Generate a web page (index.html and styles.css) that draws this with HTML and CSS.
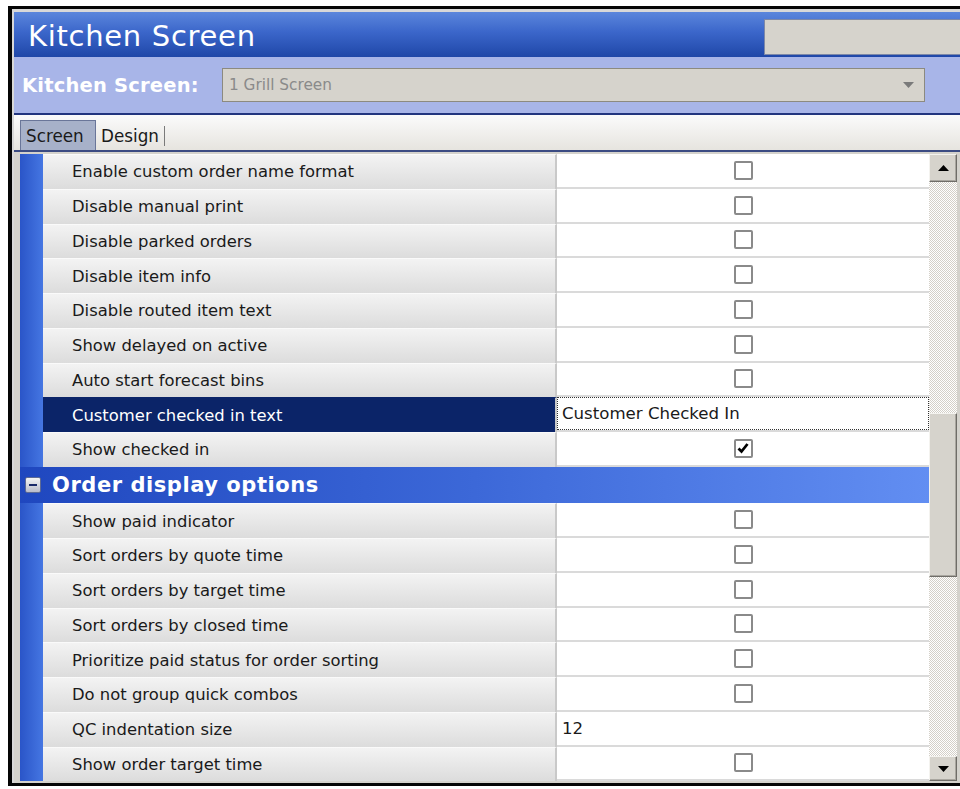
FILE: index.html
```html
<!DOCTYPE html>
<html>
<head>
<meta charset="utf-8">
<title>Kitchen Screen</title>
<link rel="stylesheet" href="styles.css">
</head>
<body>
<div class="window">
  <div class="frame">
    <div class="titlebar">
      <span class="title">Kitchen Screen</span>
      <div class="title-box"></div>
    </div>
    <div class="selector">
      <span class="sel-label">Kitchen Screen:</span>
      <div class="combo">
        <span class="combo-text">1 Grill Screen</span>
        <svg class="combo-arrow" width="11" height="6" viewBox="0 0 11 6"><path d="M0 0 H11 L5.5 6 Z" fill="#7a7a7a"/></svg>
      </div>
    </div>
    <div class="tabs">
      <div class="tab active">Screen</div>
      <div class="tab">Design</div>
      <span class="tab-sep"></span>
    </div>
    <div class="content">
      <div class="rows">
        <div class="row"><span class="strip"></span><span class="label">Enable custom order name format</span><span class="value"><span class="check"></span></span></div>
        <div class="row"><span class="strip"></span><span class="label">Disable manual print</span><span class="value"><span class="check"></span></span></div>
        <div class="row"><span class="strip"></span><span class="label">Disable parked orders</span><span class="value"><span class="check"></span></span></div>
        <div class="row"><span class="strip"></span><span class="label">Disable item info</span><span class="value"><span class="check"></span></span></div>
        <div class="row"><span class="strip"></span><span class="label">Disable routed item text</span><span class="value"><span class="check"></span></span></div>
        <div class="row"><span class="strip"></span><span class="label">Show delayed on active</span><span class="value"><span class="check"></span></span></div>
        <div class="row"><span class="strip"></span><span class="label">Auto start forecast bins</span><span class="value"><span class="check"></span></span></div>
        <div class="row selected"><span class="strip"></span><span class="label">Customer checked in text</span><span class="value text"><span class="edit">Customer Checked In</span></span></div>
        <div class="row"><span class="strip"></span><span class="label">Show checked in</span><span class="value"><span class="check on"><svg width="14" height="14" viewBox="0 0 14 14"><path d="M2.5 7.5 L5.5 10.5 L11.5 3" fill="none" stroke="#000" stroke-width="2.8"/></svg></span></span></div>
        <div class="row group">
          <span class="toggle"><span class="toggle-bar"></span></span>
          <span class="group-title">Order display options</span>
        </div>
        <div class="row"><span class="strip"></span><span class="label">Show paid indicator</span><span class="value"><span class="check"></span></span></div>
        <div class="row"><span class="strip"></span><span class="label">Sort orders by quote time</span><span class="value"><span class="check"></span></span></div>
        <div class="row"><span class="strip"></span><span class="label">Sort orders by target time</span><span class="value"><span class="check"></span></span></div>
        <div class="row"><span class="strip"></span><span class="label">Sort orders by closed time</span><span class="value"><span class="check"></span></span></div>
        <div class="row"><span class="strip"></span><span class="label">Prioritize paid status for order sorting</span><span class="value"><span class="check"></span></span></div>
        <div class="row"><span class="strip"></span><span class="label">Do not group quick combos</span><span class="value"><span class="check"></span></span></div>
        <div class="row"><span class="strip"></span><span class="label">QC indentation size</span><span class="value text"><span class="plain">12</span></span></div>
        <div class="row"><span class="strip"></span><span class="label">Show order target time</span><span class="value"><span class="check"></span></span></div>
      </div>
      <div class="scrollbar">
        <div class="sb-btn up"><svg width="11" height="6" viewBox="0 0 11 6"><path d="M0 6 H11 L5.5 0 Z" fill="#000"/></svg></div>
        <div class="sb-track top"></div>
        <div class="sb-thumb"></div>
        <div class="sb-track rest"></div>
        <div class="sb-btn down"><svg width="11" height="6" viewBox="0 0 11 6"><path d="M0 0 H11 L5.5 6 Z" fill="#000"/></svg></div>
      </div>
    </div>
  </div>
</div>
</body>
</html>
```
FILE: styles.css
```css
html, body {
  margin: 0;
  padding: 0;
}

body {
  background: #fff;
  overflow: hidden;
  font-family: "DejaVu Sans", "Liberation Sans", sans-serif;
  color: #1e1e1e;
}

/* outer window chrome */
.window {
  margin: 6px 0 0 8px;
  width: 948px;
  border: solid #050505;
  border-width: 3px 0 3px 4px;
}

.frame {
  border: solid #d8d8d8;
  border-width: 3px 0 0 2px;
}

/* caption bar */
.titlebar {
  height: 45px;
  display: flex;
  align-items: center;
  justify-content: space-between;
  background: linear-gradient(#5b86dc, #3b66ca 45%, #1f47a8);
}

.title {
  padding-left: 14px;
  padding-top: 3px;
  font-size: 29px;
  color: #fff;
  letter-spacing: 0.7px;
}

.title-box {
  align-self: flex-end;
  margin-bottom: 2px;
  width: 195px;
  height: 34px;
  background: #d6d3cc;
  border: 1px solid #7d88a8;
  border-right: 0;
}

/* screen selector */
.selector {
  height: 56px;
  display: flex;
  align-items: center;
  background: #a8b5e8;
}

.sel-label {
  width: 200px;
  padding-left: 8px;
  font-size: 19.5px;
  font-weight: bold;
  color: #fff;
  letter-spacing: 0.2px;
}

.combo {
  width: 701px;
  height: 32px;
  display: flex;
  align-items: center;
  justify-content: space-between;
  background: #d6d3cc;
  border: 1px solid #8c8a80;
}

.combo-text {
  padding-left: 6px;
  font-size: 15.3px;
  color: #8a8a8a;
}

.combo-arrow {
  margin-right: 10px;
}

/* tab strip */
.tabs {
  height: 35px;
  display: flex;
  align-items: flex-end;
  padding-left: 6px;
  border-top: 2px solid #22357f;
  border-bottom: 2px solid #3b4b82;
  background: linear-gradient(#fbfbfb, #e6e4df);
}

.tab {
  height: 29px;
  padding: 0 5px;
  display: flex;
  align-items: center;
  font-size: 16.8px;
  color: #1a1a1a;
}

.tab.active {
  width: 64px;
  background: #a7b1c9;
  border: 1px solid #6a7699;
  border-bottom: 0;
}

.tab-sep {
  align-self: center;
  margin-top: 6px;
  width: 1px;
  height: 20px;
  background: #7a7a7a;
}

/* property grid */
.content {
  display: flex;
  padding: 2px 3px 2px 6px;
  background: #d4d2cc;
}

.rows {
  width: 909px;
  display: flex;
  flex-direction: column;
}

.row {
  height: 34.75px;
  display: grid;
  grid-template-columns: 23px 514px 372px;
}

.strip {
  background: linear-gradient(to right, #2a55c8, #4576e2);
}

.label {
  display: flex;
  align-items: center;
  padding-left: 29px;
  font-size: 16.4px;
  color: #1a1a1a;
  background: linear-gradient(#f3f3f3, #dcdcdc);
  border-top: 1px solid #fafafa;
  border-right: 2px solid #c9c9c9;
}

.value {
  display: flex;
  align-items: center;
  justify-content: center;
  background: #fff;
  border-bottom: 2px solid #dadada;
}

.value.text {
  justify-content: flex-start;
}

.check {
  width: 15px;
  height: 15px;
  border: 2px solid #8a8a8a;
  border-radius: 2px;
  background: #fff;
  display: flex;
  align-items: center;
  justify-content: center;
}

.plain {
  padding-left: 5px;
  font-size: 16.6px;
  color: #1a1a1a;
}

.selected .label {
  background: #0b2468;
  border-top-color: #0b2468;
  color: #fff;
}

.edit {
  align-self: stretch;
  flex: 1;
  display: flex;
  align-items: center;
  padding-left: 4px;
  font-size: 16.6px;
  color: #1a1a1a;
  border: 1px dotted #333;
}

/* collapsible group header */
.row.group {
  height: 36.6px;
  display: flex;
  align-items: center;
  background: linear-gradient(to right, #1f47bf, #3c68d8 50%, #628ef2);
}

.toggle {
  margin-left: 5px;
  width: 14px;
  height: 14px;
  display: flex;
  align-items: center;
  justify-content: center;
  background: linear-gradient(#f4f4f4, #b9bccb);
  border: 1px solid #5d6a95;
  border-radius: 2px;
}

.toggle-bar {
  width: 8px;
  height: 2px;
  background: #1b2b6a;
}

.group-title {
  margin-left: 11px;
  font-size: 21px;
  font-weight: bold;
  color: #fff;
  letter-spacing: 0.55px;
}

/* vertical scroll bar */
.scrollbar {
  width: 28px;
  display: flex;
  flex-direction: column;
  background: repeating-conic-gradient(#d4d0c8 0 25%, #fff 0 50%) 0 0 / 2px 2px;
}

.sb-btn, .sb-thumb {
  background: #d6d3cc;
  border: 1px solid;
  border-color: #f4f3ef #6f6d68 #6f6d68 #f4f3ef;
  box-shadow: inset -1px -1px 0 #a9a69f;
}

.sb-btn {
  height: 26px;
  display: flex;
  align-items: center;
  justify-content: center;
}

.sb-btn.down {
  height: 23px;
}

.sb-track.top {
  height: 231px;
}

.sb-thumb {
  height: 162px;
}

.sb-track.rest {
  flex: 1;
}
```
